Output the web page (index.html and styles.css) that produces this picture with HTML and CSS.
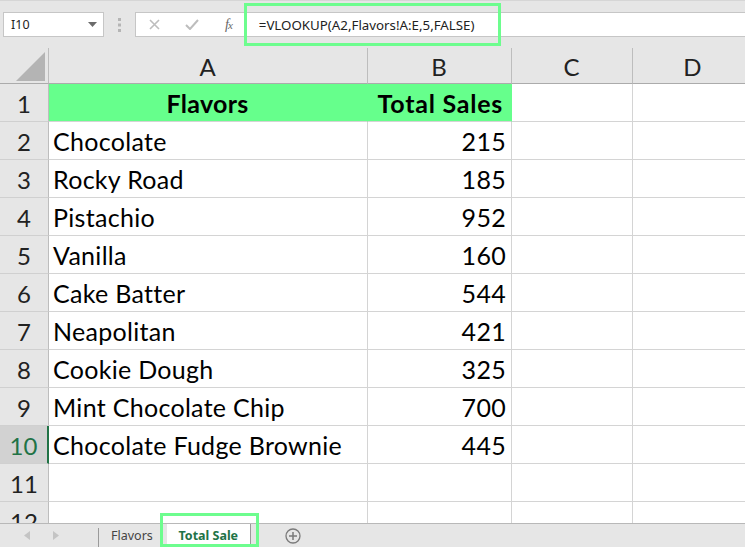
FILE: index.html
```html
<!DOCTYPE html>
<html>
<head>
<meta charset="utf-8">
<link rel="stylesheet" href="styles.css">
</head>
<body>
<div class="app">
  <div class="toolbar">
    <div class="namebox">
      <span class="name">I10</span>
      <svg class="drop" width="9" height="5" viewBox="0 0 9 5"><path d="M0 0H9L4.5 5Z" fill="#6b6b6b"/></svg>
    </div>
    <div class="grip">
      <svg width="3" height="14" viewBox="0 0 3 14"><rect x="0" y="0" width="3" height="3" fill="#b5b5b5"/><rect x="0" y="5.5" width="3" height="3" fill="#b5b5b5"/><rect x="0" y="11" width="3" height="3" fill="#b5b5b5"/></svg>
    </div>
    <div class="fxbox">
      <svg class="ico ico-x" width="11" height="11" viewBox="0 0 11 11"><path d="M1 1L10 10M10 1L1 10" stroke="#bdbdbd" stroke-width="1.6"/></svg>
      <svg class="ico ico-ok" width="14" height="11" viewBox="0 0 14 11"><path d="M1 6L5 10L13 1" stroke="#bdbdbd" stroke-width="2" fill="none"/></svg>
      <span class="fx">f<span class="fxx">x</span></span>
      <span class="formula">=VLOOKUP(A2,Flavors!A:E,5,FALSE)</span>
    </div>
  </div>

  <div class="sheet">
    <div class="c corner"><svg width="48" height="36" viewBox="0 0 48 36"><path d="M16 33H45V4Z" fill="#b4b4b4"/></svg></div>
    <div class="c ch">A</div>
    <div class="c ch">B</div>
    <div class="c ch">C</div>
    <div class="c ch">D</div>

    <div class="c rh">1</div>
    <div class="c g gA">Flavors</div>
    <div class="c g gB">Total Sales</div>
    <div class="c"></div>
    <div class="c"></div>

    <div class="c rh">2</div>
    <div class="c">Chocolate</div>
    <div class="c num">215</div>
    <div class="c"></div>
    <div class="c"></div>

    <div class="c rh">3</div>
    <div class="c">Rocky Road</div>
    <div class="c num">185</div>
    <div class="c"></div>
    <div class="c"></div>

    <div class="c rh">4</div>
    <div class="c">Pistachio</div>
    <div class="c num">952</div>
    <div class="c"></div>
    <div class="c"></div>

    <div class="c rh">5</div>
    <div class="c">Vanilla</div>
    <div class="c num">160</div>
    <div class="c"></div>
    <div class="c"></div>

    <div class="c rh">6</div>
    <div class="c">Cake Batter</div>
    <div class="c num">544</div>
    <div class="c"></div>
    <div class="c"></div>

    <div class="c rh">7</div>
    <div class="c">Neapolitan</div>
    <div class="c num">421</div>
    <div class="c"></div>
    <div class="c"></div>

    <div class="c rh">8</div>
    <div class="c">Cookie Dough</div>
    <div class="c num">325</div>
    <div class="c"></div>
    <div class="c"></div>

    <div class="c rh">9</div>
    <div class="c">Mint Chocolate Chip</div>
    <div class="c num">700</div>
    <div class="c"></div>
    <div class="c"></div>

    <div class="c rh sel">10</div>
    <div class="c">Chocolate Fudge Brownie</div>
    <div class="c num">445</div>
    <div class="c"></div>
    <div class="c"></div>

    <div class="c rh">11</div>
    <div class="c"></div>
    <div class="c"></div>
    <div class="c"></div>
    <div class="c"></div>

    <div class="c rh">12</div>
    <div class="c"></div>
    <div class="c"></div>
    <div class="c"></div>
    <div class="c"></div>
  </div>

  <div class="tabs">
    <div class="nav">
      <svg width="6" height="9" viewBox="0 0 6 9"><path d="M6 0V9L0 4.5Z" fill="#c4c4c4"/></svg>
      <svg width="6" height="9" viewBox="0 0 6 9"><path d="M0 0V9L6 4.5Z" fill="#c4c4c4"/></svg>
    </div>
    <div class="tab">Flavors</div>
    <div class="tab active">Total Sale</div>
    <div class="add">
      <svg width="16" height="16" viewBox="0 0 16 16"><circle cx="8" cy="8" r="7" fill="none" stroke="#7a7a7a" stroke-width="1.3"/><path d="M8 4V12M4 8H12" stroke="#7a7a7a" stroke-width="1.5"/></svg>
    </div>
  </div>

  <div class="hl hl-formula"></div>
  <div class="hl hl-tab"></div>
</div>
</body>
</html>
```
FILE: styles.css
```css
* { box-sizing: border-box; }
html, body { margin: 0; padding: 0; }
body { background: #ffffff; width: 745px; height: 547px; overflow: hidden; }

.app {
  position: relative;
  width: 745px;
  height: 547px;
  overflow: hidden;
  background: #e6e6e6;
  font-family: Lato, "Liberation Sans", sans-serif;
}

/* formula bar */
.toolbar {
  height: 48px;
  display: flex;
  align-items: flex-start;
  padding: 11px 0 0 3px;
  border-top: 1px solid #d6d6d6;
  background: #e6e6e6;
}
.namebox {
  width: 101px;
  height: 25px;
  background: #fff;
  border: 1px solid #c6c6c6;
  display: flex;
  align-items: center;
  justify-content: space-between;
  padding: 0 6px 0 7px;
  font-family: "Noto Sans", "Open Sans", sans-serif;
  font-size: 12.5px;
  color: #222;
}
.drop { display: block; }
.grip {
  width: 31px;
  height: 25px;
  display: flex;
  align-items: center;
  justify-content: center;
}
.grip svg { display: block; }
.fxbox {
  flex: 1;
  height: 25px;
  background: #fff;
  border: 1px solid #c6c6c6;
  border-right: none;
  display: flex;
  align-items: center;
  padding-left: 13px;
}
.ico { display: block; }
.ico-ok { margin-left: 25px; }
.fx {
  margin-left: 26px;
  font-family: "Liberation Serif", serif;
  font-style: italic;
  font-size: 14px;
  color: #666;
  letter-spacing: -1px;
}
.fxx { font-size: 11px; }
.formula {
  margin-left: 27px;
  font-family: "Noto Sans", "Open Sans", sans-serif;
  font-size: 13.3px;
  color: #222;
  white-space: nowrap;
}

/* sheet grid */
.sheet {
  height: 475px;
  display: grid;
  grid-template-columns: 49px 319px 144px 121px 121px;
  grid-template-rows: 36px repeat(12, 38px);
  background: #fff;
  overflow: hidden;
}
.c {
  border-right: 1px solid #d4d4d4;
  border-bottom: 1px solid #d4d4d4;
  display: flex;
  align-items: center;
  padding: 1px 5px 0 4px;
  font-size: 25px;
  letter-spacing: 0.3px;
  color: #000;
  white-space: nowrap;
  overflow: hidden;
  background: #fff;
}
.corner {
  padding: 0;
  background: #e6e6e6;
  border-right: 1px solid #bdbdbd;
  border-bottom: 1px solid #ababab;
}
.corner svg { display: block; }
.ch {
  background: #e6e6e6;
  justify-content: center;
  color: #222;
  letter-spacing: 0;
  font-size: 24px;
  border-right: 1px solid #bdbdbd;
  border-bottom: 1px solid #ababab;
}
.rh {
  background: #e6e6e6;
  justify-content: center;
  color: #222;
  letter-spacing: 0;
  font-size: 24px;
  border-right: 1px solid #bdbdbd;
  border-bottom: 1px solid #d0d0d0;
  padding: 2px 0 0 0;
}
.rh.sel {
  background: #d2d2d2;
  color: #217346;
  border-right: 2px solid #217346;
}
.g {
  background: #66ff8c;
  font-weight: 700;
  border-right-color: #66ff8c;
}
.gA { justify-content: center; }
.gB { justify-content: flex-end; letter-spacing: 0.75px; padding-right: 8px; }
.num { justify-content: flex-end; }

/* sheet tabs */
.tabs {
  height: 24px;
  border-top: 1px solid #b8b8b8;
  background: #e6e6e6;
  display: flex;
  align-items: stretch;
  font-family: "Noto Sans", "Open Sans", sans-serif;
  font-size: 12.5px;
  white-space: nowrap;
}
.nav {
  width: 99px;
  display: flex;
  align-items: center;
  gap: 23px;
  padding-left: 24px;
  border-right: 1px solid #9a9a9a;
  margin-top: 4px;
}
.nav svg { display: block; margin-top: -4px; }
.tab {
  display: flex;
  align-items: center;
  padding: 0 12px;
  color: #444;
}
.tab.active {
  background: #fff;
  color: #217346;
  font-weight: 700;
  padding: 0;
  width: 84px;
  justify-content: center;
  border-right: 1px solid #9a9a9a;
  margin-left: 2px;
}
.add {
  display: flex;
  align-items: center;
  padding-left: 34px;
}
.add svg { display: block; }

/* annotation highlights */
.hl {
  position: absolute;
  border: 3px solid #6dfd8e;
  pointer-events: none;
}
.hl-formula { left: 244px; top: 3px; width: 257px; height: 43px; }
.hl-tab { left: 160px; top: 513px; width: 99px; height: 34px; }
```
